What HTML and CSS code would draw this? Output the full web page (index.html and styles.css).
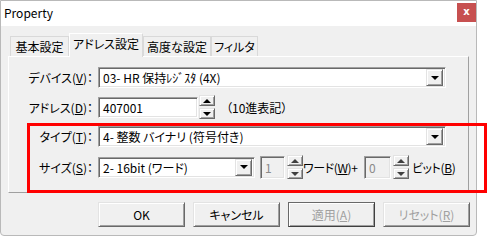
FILE: index.html
```html
<!DOCTYPE html>
<html lang="ja">

<head>
  <meta charset="UTF-8">
  <title>Property</title>
  <link rel="stylesheet" href="styles.css">
</head>

<body>

  <div class="window">
    <div class="titlebar">
      <span class="title">Property</span>
      <span class="close">x</span>
    </div>

    <div class="client">
      <div class="tabs">
        <div class="tab t1">基本設定</div>
        <div class="tab t2 active">アドレス設定</div>
        <div class="tab t3">高度な設定</div>
        <div class="tab t4">フィルタ</div>
      </div>

      <div class="panel">
        <div class="row row-device">
          <label class="lbl">デバイス(<u>V</u>)：</label>
          <div class="combo wide">
            <span class="combo-text">03- HR 保持ﾚｼﾞｽﾀ (4X)</span>
            <span class="drop"><i class="arrow-down"></i></span>
          </div>
        </div>

        <div class="row row-address">
          <label class="lbl">アドレス(<u>D</u>)：</label>
          <div class="field addr">407001</div>
          <div class="spin tall">
            <span class="spin-btn"><i class="arrow-up"></i></span>
            <span class="spin-btn"><i class="arrow-down"></i></span>
          </div>
          <span class="note">（10進表記）</span>
        </div>

        <!-- annotation box around type / size -->
        <div class="mark">
          <div class="row row-type">
            <label class="lbl">タイプ(<u>T</u>)：</label>
            <div class="combo wide">
              <span class="combo-text">4- 整数 バイナリ (符号付き)</span>
              <span class="drop"><i class="arrow-down"></i></span>
            </div>
          </div>

          <div class="row row-size">
            <label class="lbl">サイズ(<u>S</u>)：</label>
            <div class="combo short">
              <span class="combo-text">2- 16bit (ワード)</span>
              <span class="drop"><i class="arrow-down"></i></span>
            </div>
            <div class="field disabled num-word">1</div>
            <div class="spin">
              <span class="spin-btn"><i class="arrow-up gray"></i></span>
              <span class="spin-btn"><i class="arrow-down gray"></i></span>
            </div>
            <span class="unit unit-word">ワード(<u>W</u>)+</span>
            <div class="field disabled num-bit">0</div>
            <div class="spin">
              <span class="spin-btn"><i class="arrow-up gray"></i></span>
              <span class="spin-btn"><i class="arrow-down gray"></i></span>
            </div>
            <span class="unit unit-bit">ビット(<u>B</u>)</span>
          </div>
        </div>
      </div>

      <div class="buttons">
        <button class="btn">OK</button>
        <button class="btn">キャンセル</button>
        <button class="btn default" disabled>適用(<u>A</u>)</button>
        <button class="btn" disabled>リセット(<u>R</u>)</button>
      </div>
    </div>
  </div>

</body>

</html>
```

FILE: styles.css
```css
body {
  margin: 0;
  background-color: #ffffff;
  font-family: "Noto Sans CJK JP", "Noto Sans", sans-serif;
  font-size: 12px;
  font-feature-settings: "palt";
  color: #000;
}

.window {
  width: 475px;
  height: 234px;
  border: 1px solid #b9b9b9;
  border-radius: 0 0 4px 4px;
  background-color: #f0f0f0;
}

.titlebar {
  height: 25px;
  background-color: #ffffff;
  display: flex;
  align-items: flex-start;
  justify-content: space-between;
}

.title {
  margin: 5px 0 0 3px;
  font-size: 12px;
  line-height: 14px;
  font-feature-settings: normal;
}

.close {
  width: 19px;
  height: 19px;
  margin: 2px 0 0 0;
  background-color: #c75050;
  color: #fff;
  font-family: "DejaVu Sans", sans-serif;
  font-weight: bold;
  font-size: 10px;
  line-height: 18px;
  text-align: center;
}

.client {
  padding-top: 7px;
}

/* tabs */
.tabs {
  display: flex;
  align-items: flex-end;
  padding-left: 9px;
  height: 23px;
  position: relative;
  z-index: 2;
}

.tab {
  box-sizing: border-box;
  height: 20px;
  border: 1px solid #d9d9d9;
  border-bottom: none;
  background-color: #f0f0f0;
  text-align: center;
  line-height: 20px;
  white-space: nowrap;
}

.t1 { width: 59px; }
.t2 { width: 74px; }
.t3 { width: 68px; }
.t4 { width: 47px; }

.tab.active {
  height: 24px;
  margin-bottom: -1px;
  line-height: 20px;
  border-color: #ffffff #d9d9d9 #f0f0f0 #ffffff;
}

.panel {
  box-sizing: border-box;
  width: 461px;
  height: 137px;
  margin-left: 7px;
  border: 1px solid;
  border-color: #ffffff #a0a0a0 #a0a0a0 #ffffff;
  padding-top: 10px;
}

.row {
  display: flex;
  align-items: center;
}

.lbl {
  width: 84px;
  margin-right: 5px;
  text-align: right;
  white-space: nowrap;
}

.row-device { height: 21px; }

.row-address {
  height: 24px;
  margin-top: 7px;
}

/* red annotation frame */
.mark {
  box-sizing: border-box;
  width: 460px;
  height: 70px;
  margin: 4px 0 0 18px;
  border: 3px solid #ff0000;
  position: relative;
  z-index: 3;
}

.mark .lbl { width: 63px; }

.row-type { height: 21px; }

.row-size {
  height: 24px;
  margin-top: 8px;
}

/* sunken fields */
.combo,
.field {
  box-sizing: border-box;
  height: 21px;
  background-color: #ffffff;
  border: 1px solid;
  border-color: #a0a0a0 #ffffff #ffffff #a0a0a0;
  box-shadow: inset 1px 1px 0 #696969, inset -1px -1px 0 #e3e3e3;
  display: flex;
  align-items: center;
}

.combo { justify-content: space-between; }
.combo.wide { width: 348px; }
.combo.short { width: 157px; }

.combo-text {
  padding-left: 4px;
  white-space: nowrap;
}

.drop {
  box-sizing: border-box;
  width: 17px;
  height: 17px;
  margin-right: 2px;
  background-color: #f0f0f0;
  border: 1px solid;
  border-color: #e3e3e3 #696969 #696969 #e3e3e3;
  box-shadow: inset 1px 1px 0 #ffffff, inset -1px -1px 0 #a0a0a0;
  display: flex;
  align-items: center;
  justify-content: center;
}

.field { padding-left: 4px; }
.field.addr { width: 100px; }

.field.disabled {
  background-color: #f0f0f0;
  color: #8a8a8a;
  height: 23px;
}

.num-word {
  width: 25px;
  margin-left: 5px;
}

.num-bit {
  width: 27px;
}

.spin {
  display: flex;
  flex-direction: column;
  justify-content: space-between;
  width: 16px;
  height: 24px;
  margin-left: 2px;
}

.spin.tall { margin-left: 1px; }

.spin-btn {
  box-sizing: border-box;
  height: 11px;
  background-color: #f0f0f0;
  border: 1px solid;
  border-color: #e3e3e3 #696969 #696969 #e3e3e3;
  box-shadow: inset 1px 1px 0 #ffffff, inset -1px -1px 0 #a0a0a0;
  display: flex;
  align-items: center;
  justify-content: center;
}

.arrow-down,
.arrow-up {
  width: 0;
  height: 0;
  border-left: 4px solid transparent;
  border-right: 4px solid transparent;
}

.arrow-down { border-top: 4px solid #000; }
.arrow-up { border-bottom: 4px solid #000; }
.arrow-down.gray { border-top-color: #404040; }
.arrow-up.gray { border-bottom-color: #404040; }

.note { margin-left: 11px; }

.unit {
  white-space: nowrap;
  letter-spacing: -0.4px;
}

.unit-word {
  width: 61px;
  flex-shrink: 0;
}

.unit-bit { margin-left: 3px; }

/* dialog buttons */
.buttons {
  display: flex;
  gap: 8px;
  padding: 9px 0 0 97px;
}

.btn {
  box-sizing: border-box;
  width: 87px;
  height: 25px;
  padding: 0;
  font-family: inherit;
  font-size: 12px;
  font-feature-settings: "palt";
  color: #000;
  background-color: #f0f0f0;
  border: 1px solid;
  border-color: #e3e3e3 #696969 #696969 #e3e3e3;
  box-shadow: inset 1px 1px 0 #ffffff, inset -1px -1px 0 #a0a0a0;
}

.btn:disabled { color: #a0a0a0; }

.btn.default {
  border-color: #696969 #404040 #404040 #696969;
}
```
